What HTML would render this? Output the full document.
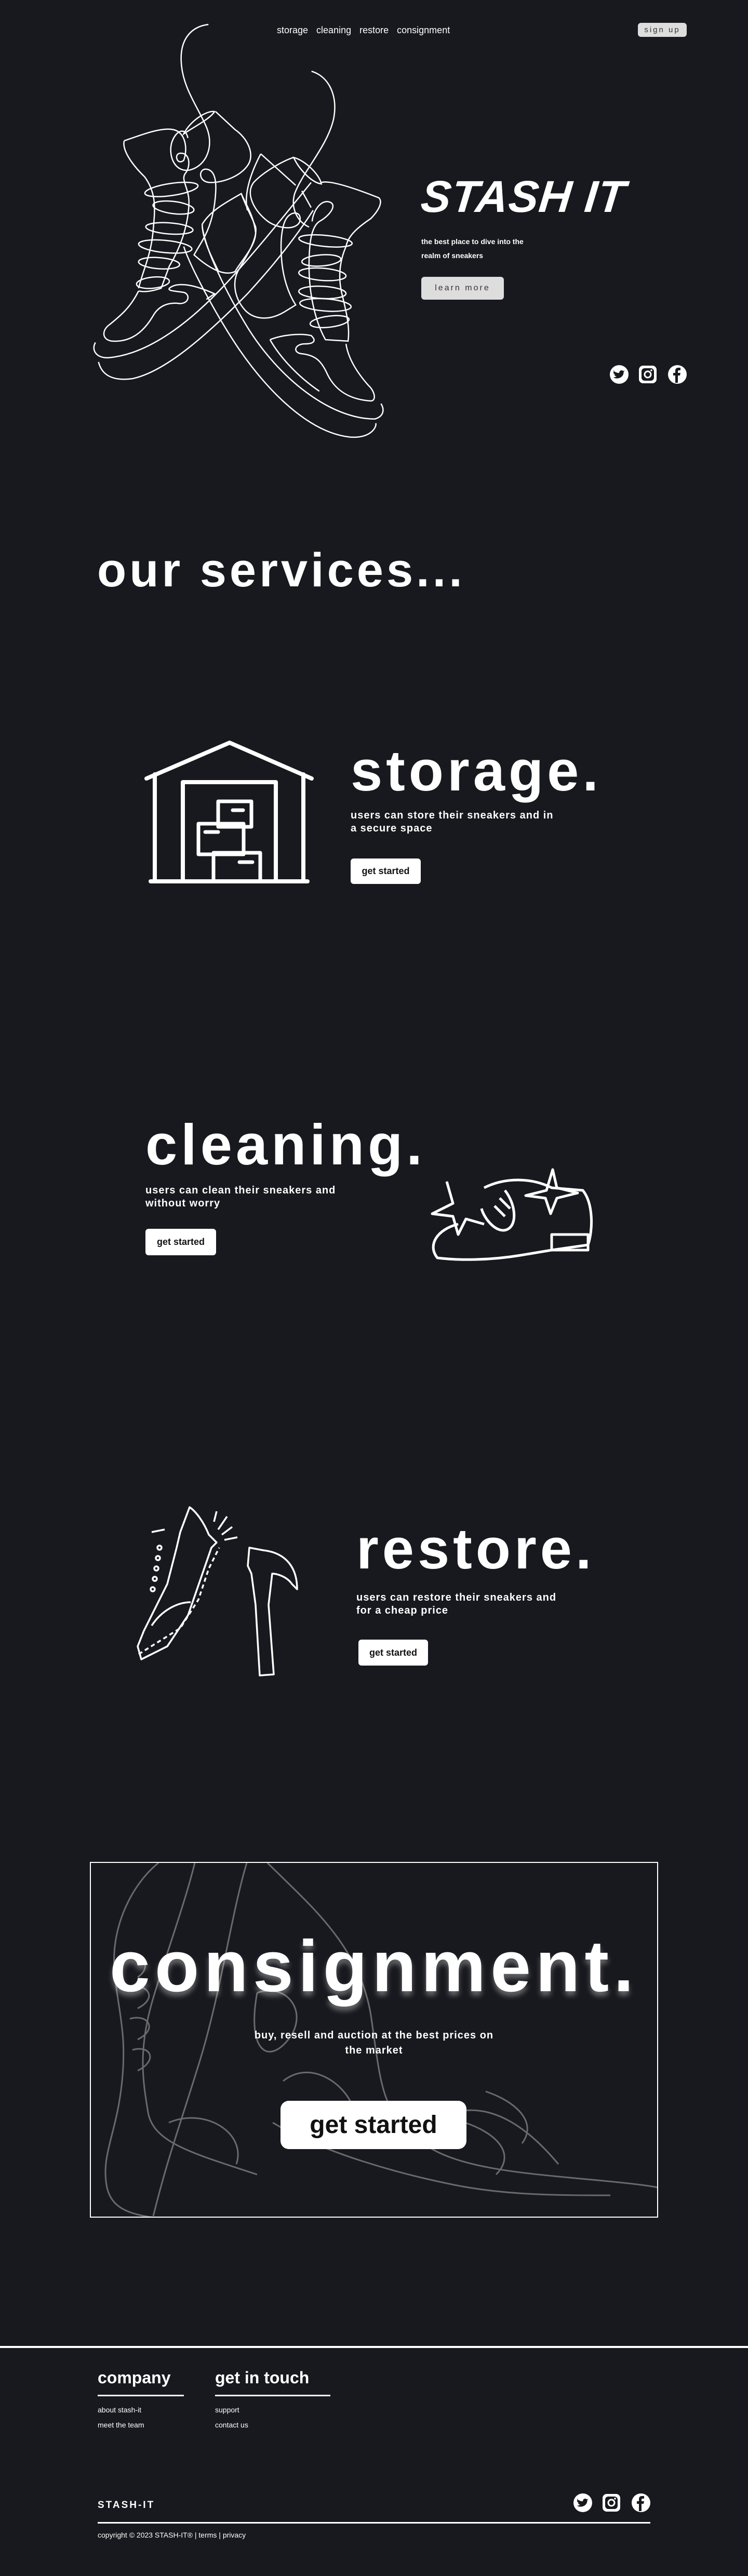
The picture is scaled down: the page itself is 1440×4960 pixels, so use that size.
<!DOCTYPE html>
<html><head><meta charset="utf-8"><style>
*{margin:0;padding:0;box-sizing:border-box}
body{width:1440px;height:4960px;background:#18191e;position:relative;overflow:hidden;font-family:"Liberation Sans",sans-serif;color:#fff}
.a{position:absolute}
.nav{left:533px;top:48px;font-size:18px;word-spacing:6px;white-space:nowrap}
.nav span{margin-right:16px}
.btn{background:#fff;color:#111;font-weight:bold;border-radius:6px;display:flex;align-items:center;justify-content:center}
.h{font-weight:bold;letter-spacing:7px;white-space:nowrap;line-height:1}
.d{font-weight:bold;font-size:20px;letter-spacing:1px;line-height:25px}
svg{position:absolute;overflow:visible}
.shoe *{vector-effect:non-scaling-stroke}
</style></head><body>

<div class="a nav"><span>storage</span><span>cleaning</span><span>restore</span><span>consignment</span></div>
<div class="a" style="left:1228px;top:44px;width:94px;height:27px;background:#ddd;color:#333;border-radius:6px;font-size:15px;letter-spacing:3px;display:flex;align-items:center;justify-content:center">sign up</div>

<!-- hero sneakers -->
<svg class="shoe" style="left:0;top:0" width="1440" height="900">
<g transform="translate(160,30) scale(0.3954,0.5357)" fill="none" stroke="#fff" stroke-width="2.5">
<path d="M610 32C520 40 470 90 478 170C485 260 560 330 600 400C640 470 600 540 520 555C450 565 415 510 430 460C450 410 500 400 510 440"/>
<path d="M490 425C540 400 620 370 640 345C600 340 520 380 490 425Z"/>
<path d="M645 345L740 410C800 440 840 500 800 540C760 580 680 600 620 600C560 600 560 550 600 552C640 555 650 590 645 640C640 700 620 760 580 810L540 860C600 900 680 940 740 920C770 880 840 830 840 780C830 720 800 690 770 640C700 670 620 700 580 750C580 800 620 860 660 920"/>
<path d="M200 450C280 430 380 400 440 410C500 420 510 480 490 520C460 540 440 500 470 495C520 490 525 540 500 565C470 590 520 620 515 680C510 760 470 840 420 900C400 940 390 960 380 980C340 990 300 995 270 990"/>
<path d="M200 450C190 480 230 530 300 580C360 640 350 700 340 780C330 860 290 920 270 980"/>
<path d="M270 990C230 1050 180 1080 130 1110C90 1130 90 1165 140 1170C240 1175 300 1130 340 1080C370 1040 420 1030 470 1035C520 1035 520 1000 490 995C450 990 410 990 420 980C450 960 520 960 640 1000L600 1020"/>
<path d="M60 1175C40 1200 60 1230 120 1230C300 1220 500 1120 700 960C850 840 1000 700 1110 600"/>
<path d="M75 1245C90 1290 140 1315 240 1305C400 1280 600 1150 800 1000C950 880 1050 780 1120 700"/>
<ellipse cx="430" cy="625" rx="130" ry="22" transform="rotate(-6 430 625)"/>
<ellipse cx="440" cy="690" rx="100" ry="22" transform="rotate(5 440 690)"/>
<ellipse cx="420" cy="765" rx="115" ry="20" transform="rotate(3 420 765)"/>
<ellipse cx="400" cy="830" rx="130" ry="22" transform="rotate(4 400 830)"/>
<ellipse cx="370" cy="890" rx="100" ry="20" transform="rotate(3 370 890)"/>
<ellipse cx="340" cy="960" rx="80" ry="20" transform="rotate(-4 340 960)"/>
<path d="M1112 200C1200 220 1240 290 1220 370C1190 470 1070 560 1030 640C1010 690 1040 740 1100 760"/>
<path d="M1025 510C1080 520 1150 570 1160 605C1110 600 1050 550 1025 510Z"/>
<path d="M1025 510C980 520 880 560 830 600C790 640 830 700 900 740C960 770 1040 770 1055 740C1065 710 1030 700 1000 720C970 740 960 800 965 860C970 940 1000 1000 1035 1040L980 1065C900 1100 830 1090 790 1060C740 1020 720 960 760 910C800 860 850 800 840 760C820 720 800 700 770 640"/>
<path d="M865 497L1035 610M865 497C820 560 780 640 800 700"/>
<path d="M1160 600C1200 590 1320 620 1440 655C1460 670 1440 700 1400 730C1340 760 1290 790 1280 830C1250 880 1240 940 1260 1000C1280 1060 1300 1120 1290 1170L1180 1165C1130 1100 1100 1000 1100 900C1100 820 1110 760 1150 740C1200 720 1240 680 1200 670C1160 660 1120 700 1115 740"/>
<path d="M1065 630L1110 690"/>
<path d="M580 760C600 850 700 1000 800 1120C950 1300 1200 1450 1420 1450C1470 1440 1465 1410 1450 1395"/>
<path d="M490 830C520 900 650 1080 760 1200C900 1350 1100 1500 1300 1515C1400 1520 1430 1480 1425 1465"/>
<path d="M910 1165C960 1150 1050 1140 1110 1150C1140 1170 1120 1180 1080 1180C1030 1180 1020 1210 1060 1215C1130 1220 1160 1240 1190 1290C1230 1350 1300 1380 1400 1385C1430 1385 1420 1350 1390 1330C1330 1280 1290 1230 1280 1180"/>
<path d="M910 1165C960 1230 1050 1300 1150 1350"/>
<ellipse cx="1180" cy="810" rx="130" ry="20" transform="rotate(4 1180 810)"/>
<ellipse cx="1160" cy="880" rx="95" ry="20" transform="rotate(-3 1160 880)"/>
<ellipse cx="1165" cy="930" rx="115" ry="22" transform="rotate(3 1165 930)"/>
<ellipse cx="1165" cy="995" rx="115" ry="22" transform="rotate(2 1165 995)"/>
<ellipse cx="1180" cy="1040" rx="125" ry="22" transform="rotate(3 1180 1040)"/>
<ellipse cx="1200" cy="1100" rx="95" ry="20" transform="rotate(-5 1200 1100)"/>
</g>
</svg>

<div class="a" style="left:811px;top:330px;font-size:86px;font-weight:bold;font-style:italic;letter-spacing:1px;white-space:nowrap;transform:skewX(-6deg)">STASH IT</div>
<div class="a" style="left:811px;top:452px;font-size:14px;font-weight:bold;line-height:27px">the best place to dive into the<br>realm of sneakers</div>
<div class="a" style="left:811px;top:533px;width:159px;height:44px;background:#ddd;color:#333;border-radius:6px;font-size:16px;letter-spacing:3px;display:flex;align-items:center;justify-content:center">learn more</div>

<svg style="left:1174px;top:703px" width="150" height="40">
<circle cx="18" cy="18" r="18" fill="#fff"/><path d="M8 13c4 3 8 4 11 4 0-5 5-7 8-4l3-1-2 3c0 8-6 13-14 13-3 0-5-1-7-2 3 0 5-1 7-2-3 0-4-2-5-4h2c-3-1-4-3-4-5l2 1c-2-2-2-4-1-5z" fill="#18191e" transform="translate(0,-1) scale(.95)"/>
<rect x="56" y="1" width="34" height="34" rx="8" fill="#fff"/><rect x="61" y="6" width="24" height="24" rx="6" fill="#18191e"/><circle cx="73" cy="18" r="6" stroke="#fff" stroke-width="3" fill="none"/><circle cx="80" cy="10" r="1.8" fill="#fff"/>
<circle cx="130" cy="18" r="18" fill="#fff"/><path d="M126 34V20h-4v-5h4v-4c0-4 2-6 6-6h4v5h-3c-1 0-2 1-2 2v3h5l-1 5h-4v14z" fill="#18191e"/>
</svg>

<div class="a h" style="left:187px;top:1052px;font-size:92px;letter-spacing:6px">our services...</div>

<!-- storage -->
<svg style="left:280px;top:1427px" width="322" height="275" fill="none" stroke="#fff" stroke-width="8" stroke-linecap="round" stroke-linejoin="round">
<path d="M2 72L162 3 320 72"/><path d="M18 64V270H304V64"/><path d="M72 270V79H251V270"/><path d="M10 270H312"/>
<rect x="140" y="116" width="64" height="49" stroke-width="7"/>
<rect x="102" y="159" width="87" height="59" stroke-width="7"/>
<rect x="131" y="215" width="90" height="55" stroke-width="7"/>
<path d="M168 133h20M115 175h25M181 233h25" stroke-width="7"/>
</svg>
<div class="a h" style="left:675px;top:1430px;font-size:110px">storage.</div>
<div class="a d" style="left:675px;top:1558px">users can store their sneakers and in<br>a secure space</div>
<div class="a btn" style="left:675px;top:1653px;width:135px;height:49px;font-size:18px">get started</div>

<!-- cleaning -->
<div class="a h" style="left:280px;top:2150px;font-size:110px">cleaning.</div>
<div class="a d" style="left:280px;top:2280px">users can clean their sneakers and<br>without worry</div>
<div class="a btn" style="left:280px;top:2366px;width:136px;height:51px;font-size:18px">get started</div>
<svg style="left:822px;top:2247px" width="350" height="180" fill="none" stroke="#fff" stroke-width="5" stroke-linejoin="round">
<path d="M38 28L50 70 10 90 50 95 60 130 75 100 110 110"/>
<path d="M110 40C150 20 200 20 240 40 L300 45C320 70 320 120 310 150L240 160 180 170C120 180 60 180 20 175 0 150 20 120 60 110"/>
<path d="M230 45L242 5 250 40 290 50 250 60 238 90 228 60 190 55Z"/>
<path d="M240 130h70v30h-70z"/>
<path d="M150 45C170 70 175 110 155 120S110 100 105 80"/><path d="M130 75l20 20M140 60l20 20"/>
</svg>

<!-- restore -->
<svg style="left:262px;top:2900px" width="350" height="330" fill="none" stroke="#fff" stroke-width="3.5" stroke-linejoin="round">
<path d="M103 2C115 10 130 30 140 55L155 70 145 80 100 210 80 240 60 270 10 295 3 270 15 240 60 150 78 80 85 50Z"/>
<path d="M5 285L85 235 120 180 140 120 160 80" stroke-dasharray="8 6"/>
<path d="M30 230C50 200 80 185 105 185"/>
<circle cx="45" cy="80" r="4"/><circle cx="42" cy="100" r="4"/><circle cx="39" cy="120" r="4"/><circle cx="36" cy="140" r="4"/><circle cx="32" cy="160" r="4"/>
<path d="M30 50L55 45"/>
<path d="M150 30L155 10M158 45L175 20M165 55L185 40M170 65L195 60"/>
<path d="M218 80L245 85C290 90 310 120 310 160L300 150C290 135 270 130 262 130L255 190 265 324 238 326 230 190 222 130 215 115Z"/>
</svg>
<div class="a h" style="left:686px;top:2928px;font-size:110px">restore.</div>
<div class="a d" style="left:686px;top:3064px">users can restore their sneakers and<br>for a cheap price</div>
<div class="a btn" style="left:690px;top:3157px;width:134px;height:50px;font-size:18px">get started</div>

<!-- consignment -->
<div class="a" style="left:173px;top:3585px;width:1094px;height:685px;border:2px solid #fff;overflow:hidden">
<svg style="left:0;top:0" width="1094" height="685" fill="none" stroke="#6a6a6d" stroke-width="3">
<path d="M130 0C80 40 40 120 45 200S70 320 60 420 20 560 30 620 100 680 180 690"/>
<path d="M200 0C180 80 150 160 120 260S100 420 110 480 200 560 320 600"/>
<path d="M300 0C270 100 250 250 210 380S150 560 120 680"/>
<path d="M340 0C420 80 520 160 540 300S560 480 640 540 900 600 1060 620 1100 690 1100 690"/>
<path d="M60 180C100 170 120 200 90 220M70 240C110 230 130 260 90 280M75 300C110 290 130 320 90 340M80 360C115 350 130 380 90 400"/>
<path d="M350 500C450 560 600 600 700 620S900 640 1000 640"/>
<path d="M370 420C420 380 480 420 500 460S620 500 700 480 850 520 900 580"/>
<path d="M720 500C780 520 820 560 780 600M760 440C820 460 860 500 830 540"/>
<path d="M320 250C380 230 420 290 380 340S300 360 320 250"/>
<path d="M150 500C220 470 300 520 280 580"/>
</svg>
</div>
<div class="a h" style="left:173px;top:3716px;width:1094px;text-align:center;font-size:140px;letter-spacing:9px;text-shadow:0 8px 10px rgba(255,255,255,.35)">consignment.</div>
<div class="a d" style="left:173px;top:3905px;width:1094px;text-align:center;line-height:29px">buy, resell and auction at the best prices on<br>the market</div>
<div class="a btn" style="left:540px;top:4045px;width:358px;height:93px;border-radius:16px;font-size:48px">get started</div>

<!-- footer -->
<div class="a" style="left:0;top:4517px;width:1440px;height:4px;background:#fff"></div>
<div class="a" style="left:188px;top:4560px;font-size:32px;font-weight:bold">company</div>
<div class="a" style="left:188px;top:4611px;width:166px;height:3px;background:#fff"></div>
<div class="a" style="left:414px;top:4560px;font-size:32px;font-weight:bold">get in touch</div>
<div class="a" style="left:414px;top:4611px;width:222px;height:3px;background:#fff"></div>
<div class="a" style="left:188px;top:4626px;font-size:14px;line-height:29px">about stash-it<br>meet the team</div>
<div class="a" style="left:414px;top:4626px;font-size:14px;line-height:29px">support<br>contact us</div>
<div class="a" style="left:188px;top:4813px;font-size:19px;font-weight:bold;letter-spacing:3px">STASH-IT</div>
<svg style="left:1104px;top:4801px" width="150" height="40">
<circle cx="18" cy="18" r="18" fill="#fff"/><path d="M8 13c4 3 8 4 11 4 0-5 5-7 8-4l3-1-2 3c0 8-6 13-14 13-3 0-5-1-7-2 3 0 5-1 7-2-3 0-4-2-5-4h2c-3-1-4-3-4-5l2 1c-2-2-2-4-1-5z" fill="#18191e" transform="translate(0,-1) scale(.95)"/>
<rect x="56" y="1" width="34" height="34" rx="8" fill="#fff"/><rect x="61" y="6" width="24" height="24" rx="6" fill="#18191e"/><circle cx="73" cy="18" r="6" stroke="#fff" stroke-width="3" fill="none"/><circle cx="80" cy="10" r="1.8" fill="#fff"/>
<circle cx="130" cy="18" r="18" fill="#fff"/><path d="M126 34V20h-4v-5h4v-4c0-4 2-6 6-6h4v5h-3c-1 0-2 1-2 2v3h5l-1 5h-4v14z" fill="#18191e"/>
</svg>
<div class="a" style="left:188px;top:4856px;width:1064px;height:3px;background:#fff"></div>
<div class="a" style="left:188px;top:4873px;font-size:14px">copyright © 2023 STASH-IT® | terms | privacy</div>
</body></html>
